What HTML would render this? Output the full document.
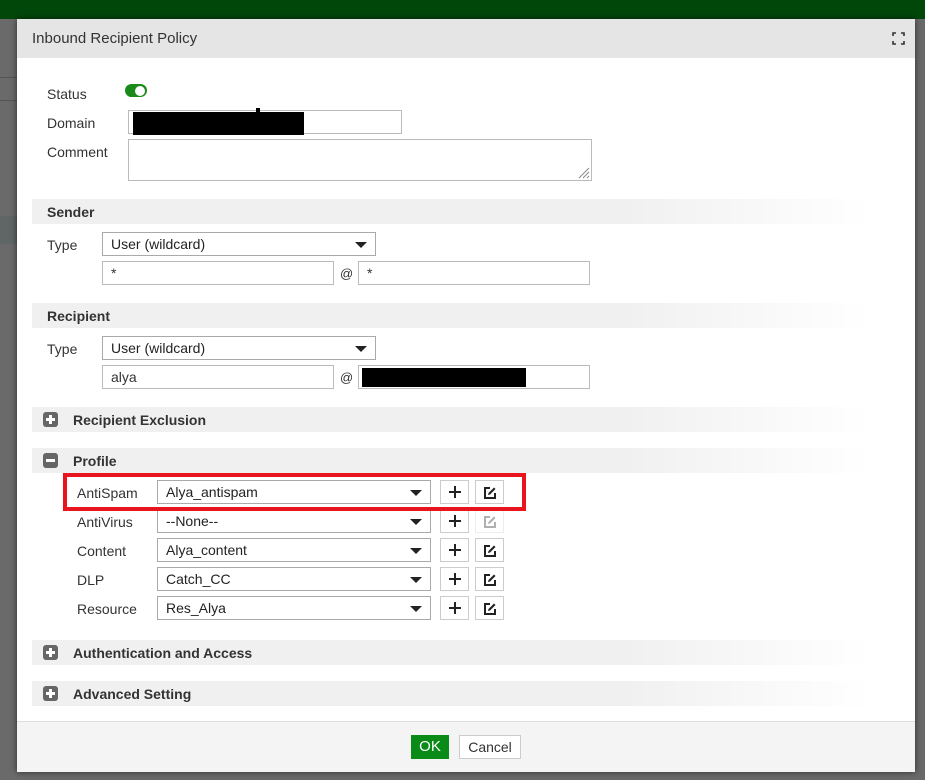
<!DOCTYPE html>
<html><head><style>
*{box-sizing:border-box;margin:0;padding:0}
body{width:925px;height:780px;overflow:hidden;background:#6a6a6a;font-family:"Liberation Sans",sans-serif;font-size:14px;color:#333;position:relative}
.a{position:absolute}
.top{left:0;top:0;width:925px;height:19px;background:#02470a}
.dlg{left:17px;top:19px;width:898px;height:753px;background:#fff;box-shadow:0 0 6px rgba(0,0,0,.6)}
.hdr{left:17px;top:19px;width:898px;height:39px;background:#e5e5e5}
.ttl{left:32px;top:30px;font-size:15px;color:#333}
.lbl{font-size:14px;color:#333}
.inp{border:1px solid #bbb;background:#fff;height:24px;font-size:14px;padding:3px 8px;color:#333}
.sec{left:32px;width:840px;height:25px;background:linear-gradient(to right,#f0f0f0 70%,#fff);font-weight:bold;font-size:14px;padding:5px 0 0 15px;color:#333}
.sel{border:1px solid #aaa;background:#fff;height:24px;font-size:14px;padding:3px 8px;color:#222}
.sel:after{content:"";position:absolute;right:8px;top:9px;border-left:6px solid transparent;border-right:6px solid transparent;border-top:6px solid #222}
.ico{width:15px;height:15px;background:#666;border-radius:3px}
.ico:before{content:"";position:absolute;left:3px;top:6px;width:9px;height:3px;background:#fff}
.ico.p:after{content:"";position:absolute;left:6px;top:3px;width:3px;height:9px;background:#fff}
.btn{width:29px;height:24px;border:1px solid #ccc;background:#fff}
.btn:before{content:"";position:absolute;left:8px;top:10px;width:12px;height:2px;background:#222}
.btn:after{content:"";position:absolute;left:13px;top:5px;width:2px;height:12px;background:#222}
.ed{width:29px;height:24px;border:1px solid #ccc;background:#fff}
.ed svg{position:absolute;left:7px;top:5px}
.foot{left:17px;top:721px;width:898px;height:51px;background:#f4f4f4;border-top:1px solid #ddd}
</style></head><body>
<div class="a top"></div>
<div class="a" style="left:0;top:77px;width:17px;height:1px;background:#555"></div>
<div class="a" style="left:0;top:100px;width:17px;height:1px;background:#555"></div>
<div class="a" style="left:0;top:216px;width:17px;height:28px;background:#5e6666"></div>
<div class="a dlg"></div>
<div class="a hdr"></div>
<div class="a ttl">Inbound Recipient Policy</div>
<svg class="a" style="left:892px;top:32px" width="13" height="13" viewBox="0 0 13 13"><path d="M1 4V1H4M9 1H12V4M12 9V12H9M4 12H1V9" fill="none" stroke="#333" stroke-width="1.6"/></svg>

<div class="a lbl" style="left:47px;top:86px">Status</div>
<div class="a" style="left:125px;top:84px;width:22px;height:13px;border-radius:7px;background:#1a8a1a"></div>
<div class="a" style="left:135px;top:86px;width:10px;height:10px;border-radius:5px;background:#fff"></div>
<div class="a lbl" style="left:47px;top:115px">Domain</div>
<div class="a inp" style="left:128px;top:110px;width:274px"></div>
<div class="a" style="left:133px;top:112px;width:171px;height:23px;background:#000"></div>
<div class="a" style="left:256px;top:108px;width:4px;height:4px;background:#000"></div>
<div class="a lbl" style="left:47px;top:144px">Comment</div>
<div class="a inp" style="left:128px;top:139px;width:464px;height:42px"></div>
<svg class="a" style="left:577px;top:166px" width="13" height="13"><path d="M2 12L12 2M6 12L12 6M10 12L12 10" stroke="#888" stroke-width="1"/></svg>

<div class="a sec" style="top:199px">Sender</div>
<div class="a lbl" style="left:47px;top:237px">Type</div>
<div class="a sel" style="left:102px;top:232px;width:274px">User (wildcard)</div>
<div class="a inp" style="left:102px;top:261px;width:232px">*</div>
<div class="a lbl" style="left:340px;top:266px;font-size:13px">@</div>
<div class="a inp" style="left:358px;top:261px;width:232px">*</div>

<div class="a sec" style="top:303px">Recipient</div>
<div class="a lbl" style="left:47px;top:341px">Type</div>
<div class="a sel" style="left:102px;top:336px;width:274px">User (wildcard)</div>
<div class="a inp" style="left:102px;top:365px;width:232px">alya</div>
<div class="a lbl" style="left:340px;top:370px;font-size:13px">@</div>
<div class="a inp" style="left:358px;top:365px;width:232px"></div>
<div class="a" style="left:362px;top:368px;width:164px;height:19px;background:#000"></div>

<div class="a sec" style="top:407px;padding-left:41px">Recipient Exclusion</div>
<div class="a ico p" style="left:43px;top:412px"></div>
<div class="a sec" style="top:448px;padding-left:41px">Profile</div>
<div class="a ico" style="left:43px;top:453px"></div>

<div class="a lbl" style="left:77px;top:485px">AntiSpam</div>
<div class="a sel" style="left:157px;top:480px;width:274px">Alya_antispam</div>
<div class="a btn" style="left:440px;top:480px"></div>
<div class="a ed" style="left:475px;top:480px"><svg width="14" height="14" viewBox="0 0 14 14"><path d="M7 2H2V12H12V7" fill="none" stroke="#222" stroke-width="2"/><path d="M5 9L5.5 7L11 1.5L12.5 3L7 8.5Z" fill="#222"/></svg></div>
<div class="a lbl" style="left:77px;top:514px">AntiVirus</div>
<div class="a sel" style="left:157px;top:509px;width:274px">--None--</div>
<div class="a btn" style="left:440px;top:509px"></div>
<div class="a ed" style="left:475px;top:509px;opacity:.35"><svg width="14" height="14" viewBox="0 0 14 14"><path d="M7 2H2V12H12V7" fill="none" stroke="#222" stroke-width="2"/><path d="M5 9L5.5 7L11 1.5L12.5 3L7 8.5Z" fill="#222"/></svg></div>
<div class="a lbl" style="left:77px;top:543px">Content</div>
<div class="a sel" style="left:157px;top:538px;width:274px">Alya_content</div>
<div class="a btn" style="left:440px;top:538px"></div>
<div class="a ed" style="left:475px;top:538px"><svg width="14" height="14" viewBox="0 0 14 14"><path d="M7 2H2V12H12V7" fill="none" stroke="#222" stroke-width="2"/><path d="M5 9L5.5 7L11 1.5L12.5 3L7 8.5Z" fill="#222"/></svg></div>
<div class="a lbl" style="left:77px;top:572px">DLP</div>
<div class="a sel" style="left:157px;top:567px;width:274px">Catch_CC</div>
<div class="a btn" style="left:440px;top:567px"></div>
<div class="a ed" style="left:475px;top:567px"><svg width="14" height="14" viewBox="0 0 14 14"><path d="M7 2H2V12H12V7" fill="none" stroke="#222" stroke-width="2"/><path d="M5 9L5.5 7L11 1.5L12.5 3L7 8.5Z" fill="#222"/></svg></div>
<div class="a lbl" style="left:77px;top:601px">Resource</div>
<div class="a sel" style="left:157px;top:596px;width:274px">Res_Alya</div>
<div class="a btn" style="left:440px;top:596px"></div>
<div class="a ed" style="left:475px;top:596px"><svg width="14" height="14" viewBox="0 0 14 14"><path d="M7 2H2V12H12V7" fill="none" stroke="#222" stroke-width="2"/><path d="M5 9L5.5 7L11 1.5L12.5 3L7 8.5Z" fill="#222"/></svg></div>

<div class="a" style="left:63px;top:473px;width:463px;height:38px;border:4px solid #e8141e"></div>

<div class="a sec" style="top:640px;padding-left:41px">Authentication and Access</div>
<div class="a ico p" style="left:43px;top:645px"></div>
<div class="a sec" style="top:681px;padding-left:41px">Advanced Setting</div>
<div class="a ico p" style="left:43px;top:686px"></div>

<div class="a foot"></div>
<div class="a" style="left:411px;top:735px;width:38px;height:24px;background:#0a8a17;color:#fff;font-size:15px;text-align:center;line-height:24px">OK</div>
<div class="a" style="left:459px;top:735px;width:62px;height:24px;background:#fff;border:1px solid #ccc;font-size:14px;text-align:center;line-height:22px;color:#333">Cancel</div>
</body></html>
